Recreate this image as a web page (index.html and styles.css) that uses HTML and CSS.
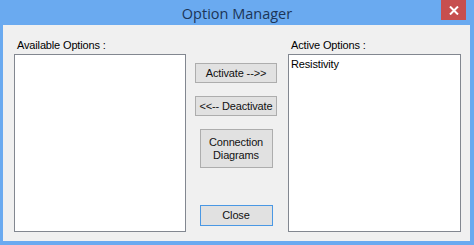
FILE: index.html
```html
<!DOCTYPE html>
<html lang="en">
  <head>
    <meta charset="UTF-8" />
    <title>Option Manager</title>
    <link rel="stylesheet" href="styles.css">
  </head>
  <body>
    <div class="window">
      <!-- Title Bar -->
      <div class="titlebar">
        <span class="title">Option Manager</span>
        <button class="close-btn" aria-label="Close">
          <svg width="10" height="9" viewBox="0 0 10 9">
            <path d="M1 0.5 L9 8.5 M9 0.5 L1 8.5" stroke="#fff" stroke-width="2" />
          </svg>
        </button>
      </div>

      <!-- Client Area -->
      <div class="client">
        <div class="list-col left">
          <div class="label">Available Options :</div>
          <div class="listbox"></div>
        </div>

        <div class="middle">
          <button class="btn wide">Activate --&gt;&gt;</button>
          <button class="btn wide">&lt;&lt;-- Deactivate</button>
          <button class="btn tall">Connection<br />Diagrams</button>
          <button class="btn default">Close</button>
        </div>

        <div class="list-col right">
          <div class="label">Active Options :</div>
          <div class="listbox">
            <div class="item">Resistivity</div>
          </div>
        </div>
      </div>
    </div>
  </body>
</html>
```

FILE: styles.css
```css
* {
  margin: 0;
  padding: 0;
  box-sizing: border-box;
}

body {
  width: 474px;
  height: 245px;
  overflow: hidden;
  font-family: "Liberation Sans", Arial, sans-serif;
  font-size: 11px;
  letter-spacing: -0.15px;
  color: #000;
}

.window {
  width: 474px;
  height: 245px;
  background-color: #6aaaf0;
  display: flex;
  flex-direction: column;
}

/* Title Bar */
.titlebar {
  height: 25px;
  position: relative;
  display: flex;
  justify-content: center;
  align-items: center;
}

.title {
  font-family: "Open Sans", "Noto Sans", sans-serif;
  font-size: 14.5px;
  letter-spacing: 0;
  color: #1c3557;
  padding-top: 1px;
}

.close-btn {
  position: absolute;
  top: 0;
  left: 441px;
  width: 25px;
  height: 20px;
  border: none;
  background-color: #c74f4f;
  display: flex;
  align-items: center;
  justify-content: center;
}

/* Client Area */
.client {
  flex-grow: 1;
  margin: 0 4px 4px 3px;
  background-color: #f0f0f0;
  display: flex;
  padding-left: 11px;
}

.list-col {
  display: flex;
  flex-direction: column;
  padding-top: 13px;
}

.list-col.left {
  width: 172px;
}

.list-col.right {
  width: 173px;
}

.label {
  height: 14px;
  line-height: 14px;
  margin-bottom: 2px;
  padding-left: 3px;
}

.listbox {
  height: 178px;
  background-color: #fff;
  border: 1px solid #828790;
  padding: 2px 2px;
}

.item {
  line-height: 14px;
}

.middle {
  width: 102px;
  display: flex;
  flex-direction: column;
  align-items: center;
  padding-top: 38px;
  padding-right: 2px;
}

.btn {
  font-family: "Liberation Sans", Arial, sans-serif;
  font-size: 11px;
  letter-spacing: -0.15px;
  color: #111;
  background-color: #e1e1e1;
  border: 1px solid #adadad;
  line-height: 13px;
}

.btn.wide {
  width: 82px;
  height: 20px;
  margin-bottom: 13px;
}

.btn.tall {
  width: 73px;
  height: 39px;
  margin-bottom: 37px;
}

.btn.default {
  width: 73px;
  height: 21px;
  border-color: #4a98e4;
}
```
